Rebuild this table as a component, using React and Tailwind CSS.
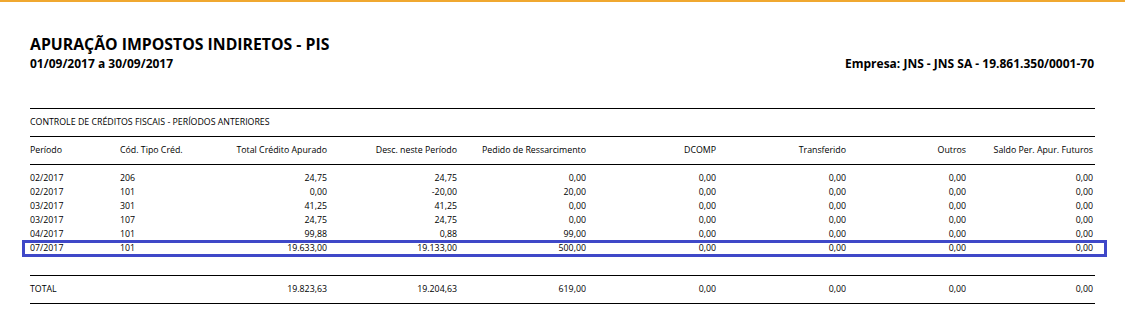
import React from "react";

const cols = "grid grid-cols-[90px_110px_97px_130px_129px_130px_130px_120px_127px] whitespace-nowrap";

const rows = [
  ["02/2017", "206", "24,75", "24,75", "0,00"],
  ["02/2017", "101", "0,00", "-20,00", "20,00"],
  ["03/2017", "301", "41,25", "41,25", "0,00"],
  ["03/2017", "107", "24,75", "24,75", "0,00"],
  ["04/2017", "101", "99,88", "0,88", "99,00"],
  ["07/2017", "101", "19.633,00", "19.133,00", "500,00"],
];

function Row({ r, highlight }) {
  return (
    <div className={`${cols} relative h-[14px] items-center leading-[14px]`}>
      <div>{r[0]}</div>
      <div>{r[1]}</div>
      <div className="text-right">{r[2]}</div>
      <div className="text-right">{r[3]}</div>
      <div className="text-right">{r[4]}</div>
      <div className="text-right">0,00</div>
      <div className="text-right">0,00</div>
      <div className="text-right">0,00</div>
      <div className="text-right">0,00</div>
      {highlight && (
        <div className="absolute -left-[8px] -right-[12px] -top-[1px] -bottom-[2px] border-[3px] border-[#3f48c8] pointer-events-none" />
      )}
    </div>
  );
}

export default function App() {
  return (
    <div
      className="w-[1125px] h-[324px] bg-white border-t-2 border-[#f0a830] overflow-hidden text-black"
      style={{ fontFamily: '"Open Sans", "Noto Sans", sans-serif' }}
    >
      <div className="px-[30px] pt-[32px]">
        <div className="flex justify-between items-end">
          <div>
            <div className="text-[15.8px] leading-[20px] font-bold">
              APURAÇÃO IMPOSTOS INDIRETOS - PIS
            </div>
            <div className="mt-[2px] text-[12px] leading-[16px] font-bold">
              01/09/2017 a 30/09/2017
            </div>
          </div>
          <div className="text-[12px] leading-[16px] font-bold pr-[1px]">
            Empresa: JNS - JNS SA - 19.861.350/0001-70
          </div>
        </div>

        <div className="mt-[36px] text-[8.8px]">
          <div className="border-t border-black h-[28px] flex items-center">
            CONTROLE DE CRÉDITOS FISCAIS - PERÍODOS ANTERIORES
          </div>
          <div className={`${cols} border-t border-black h-[28px] items-center`}>
            <div>Período</div>
            <div>Cód. Tipo Créd.</div>
            <div className="text-right">Total Crédito Apurado</div>
            <div className="text-right">Desc. neste Período</div>
            <div className="text-right">Pedido de Ressarcimento</div>
            <div className="text-right">DCOMP</div>
            <div className="text-right">Transferido</div>
            <div className="text-right">Outros</div>
            <div className="text-right">Saldo Per. Apur. Futuros</div>
          </div>
          <div className="border-t border-black pt-[6px] pb-[20px]">
            {rows.map((r, i) => (
              <Row key={i} r={r} highlight={i === rows.length - 1} />
            ))}
          </div>
          <div className={`${cols} border-t border-b border-black h-[29px] items-center`}>
            <div>TOTAL</div>
            <div></div>
            <div className="text-right">19.823,63</div>
            <div className="text-right">19.204,63</div>
            <div className="text-right">619,00</div>
            <div className="text-right">0,00</div>
            <div className="text-right">0,00</div>
            <div className="text-right">0,00</div>
            <div className="text-right">0,00</div>
          </div>
        </div>
      </div>
    </div>
  );
}
